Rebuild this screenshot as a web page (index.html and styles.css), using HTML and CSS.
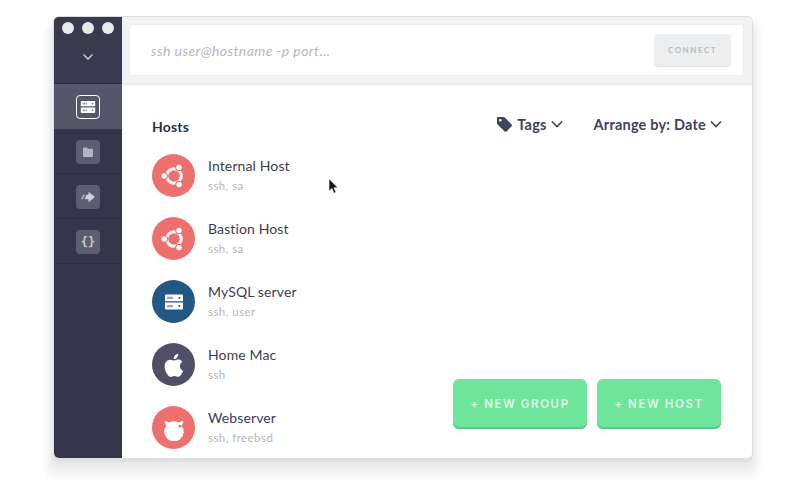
FILE: index.html
```html
<!DOCTYPE html>
<html lang="en">
<head>
<meta charset="utf-8">
<title>Hosts</title>
<link rel="stylesheet" href="styles.css">
</head>
<body>
<svg class="defs" width="0" height="0" aria-hidden="true">
  <symbol id="ubuntu" viewBox="0 0 28 28">
    <circle cx="14" cy="14" r="7.300" fill="none" stroke="#fff" stroke-width="3"/>
    <g fill="#ec706d">
      <circle cx="4.200" cy="14" r="3.800"/><circle cx="19" cy="5.400" r="3.800"/><circle cx="19" cy="22.600" r="3.800"/>
    </g>
    <circle cx="4.200" cy="14" r="2.700" fill="#fff"/>
    <circle cx="19" cy="5.400" r="2.700" fill="#fff"/>
    <circle cx="19" cy="22.600" r="2.700" fill="#fff"/>
  </symbol>
  <symbol id="server" viewBox="0 0 20 20">
    <path fill="currentColor" fill-rule="evenodd" d="M2 2.500h16a1 1 0 0 1 1 1v5.700H1V3.500a1 1 0 0 1 1-1zM3.500 4.800v2.200h1V4.800zm2 0v2.200h1V4.800zm2 0v2.200h1V4.800zM14.500 5.900a1 1 0 1 0 2 0 1 1 0 1 0-2 0zM1 10.600h18v5.900a1 1 0 0 1-1 1H2a1 1 0 0 1-1-1zM3.500 13v2.200h1V13zm2 0v2.200h1V13zm2 0v2.200h1V13zM14.500 14.100a1 1 0 1 0 2 0 1 1 0 1 0-2 0z"/>
  </symbol>
</svg>

<div class="window">
  <nav class="sidebar">
    <div class="side-top">
      <div class="lights"><span class="light"></span><span class="light"></span><span class="light"></span></div>
      <svg class="side-chevron" width="12" height="8" viewBox="0 0 12 8"><path d="M1.500 1.500 6 6l4.500-4.500" fill="none" stroke="#c9cad2" stroke-width="1.500"/></svg>
    </div>
    <div class="side-item active">
      <span class="side-icon outlined"><svg width="16" height="16"><use href="#server"/></svg></span>
    </div>
    <div class="side-item">
      <span class="side-icon"><svg width="12" height="12" viewBox="0 0 12 12"><path fill="#b4b6bf" d="M1 2.500a1 1 0 0 1 1-1h2.800l1.200 1.300h4a1 1 0 0 1 1 1V10a1 1 0 0 1-1 1H2a1 1 0 0 1-1-1z"/></svg></span>
    </div>
    <div class="side-item">
      <span class="side-icon"><svg width="16" height="12" viewBox="0 0 16 12"><path fill="#cfd0d6" d="M8.500 .8 15 6l-6.500 5.200V8.300H4.800L6.400 3.700h2.100z"/><path fill="#a9abb5" d="M.8 8.300 3 3.700h2.300L3.100 8.300z"/></svg></span>
    </div>
    <div class="side-item">
      <span class="side-icon braces">{}</span>
    </div>
  </nav>

  <main class="main">
    <header class="topbar">
      <div class="ssh-box">
        <span class="ssh-placeholder">ssh user@hostname -p port...</span>
        <span class="connect">CONNECT</span>
      </div>
    </header>

    <section class="content">
      <div class="toolbar">
        <h2 class="title">Hosts</h2>
        <div class="filters">
          <span class="filter">
            <svg width="17" height="17" viewBox="0 0 17 17"><path fill="#41435a" fill-rule="evenodd" d="M1 1.800A.8.8 0 0 1 1.800 1h5.600a2 2 0 0 1 1.400.6l6.600 6.600a1.600 1.600 0 0 1 0 2.300l-4.700 4.700a1.600 1.600 0 0 1-2.300 0L1.600 8.400A2 2 0 0 1 1 7zM3 4.300a1.300 1.300 0 1 0 2.600 0 1.300 1.300 0 1 0-2.600 0z"/></svg>
            Tags
            <svg width="12" height="8" viewBox="0 0 12 8"><path d="M1 1.500 6 6.500l5-5" fill="none" stroke="#41435a" stroke-width="1.700"/></svg>
          </span>
          <span class="filter">Arrange by: Date
            <svg width="12" height="8" viewBox="0 0 12 8"><path d="M1 1.500 6 6.500l5-5" fill="none" stroke="#41435a" stroke-width="1.700"/></svg>
          </span>
        </div>
      </div>

      <ul class="hosts">
        <li class="host">
          <span class="avatar red"><svg width="28" height="28"><use href="#ubuntu"/></svg></span>
          <div class="host-text"><div class="host-name">Internal Host</div><div class="host-sub">ssh, sa</div></div>
        </li>
        <li class="host">
          <span class="avatar red"><svg width="28" height="28"><use href="#ubuntu"/></svg></span>
          <div class="host-text"><div class="host-name">Bastion Host</div><div class="host-sub">ssh, sa</div></div>
        </li>
        <li class="host">
          <span class="avatar blue"><svg width="20" height="20"><use href="#server"/></svg></span>
          <div class="host-text"><div class="host-name">MySQL server</div><div class="host-sub">ssh, user</div></div>
        </li>
        <li class="host">
          <span class="avatar slate"><svg width="32" height="32" viewBox="0 0 24 24"><path fill="#fff" d="M16.400 12.700c0-2.100 1.700-3.100 1.800-3.200-1-1.400-2.500-1.600-3-1.600-1.300-.1-2.500.8-3.200.8s-1.700-.8-2.800-.7c-1.400 0-2.800.8-3.500 2.100-1.500 2.600-.4 6.500 1.100 8.600.7 1 1.600 2.200 2.700 2.200s1.500-.7 2.800-.7 1.700.7 2.800.7 1.900-1.100 2.600-2.100c.8-1.200 1.200-2.400 1.200-2.400s-2.500-1-2.500-3.700zM14.300 6.300c.6-.7 1-1.700.9-2.700-.8 0-1.900.6-2.500 1.300-.5.6-1 1.600-.9 2.600.9.100 1.900-.5 2.500-1.200z"/></svg></span>
          <div class="host-text"><div class="host-name">Home Mac</div><div class="host-sub">ssh</div></div>
        </li>
        <li class="host">
          <span class="avatar red"><svg width="26" height="26" viewBox="0 0 26 26"><path fill="#fff" d="M3.500 6c2 .2 3.500.7 4.800 1.500a10 10 0 0 1 9.400 0c1.300-.8 2.800-1.300 4.800-1.500-.3 1.800-.9 3.400-1.800 4.700A9.700 9.700 0 1 1 5.300 10.700C4.400 9.400 3.800 7.800 3.500 6z"/><path fill="#ec706d" d="M17.300 10.500c1.200-.6 2.800-.5 3.500.4-.2 1-1 1.800-2 1.700-.9-.1-1.500-1.100-1.500-2.100z"/></svg></span>
          <div class="host-text"><div class="host-name">Webserver</div><div class="host-sub">ssh, freebsd</div></div>
        </li>
      </ul>

      <div class="actions">
        <span class="action wide">+ NEW GROUP</span>
        <span class="action">+ NEW HOST</span>
      </div>

      <svg class="cursor" width="12" height="17" viewBox="0 0 12 17"><path fill="#16171c" stroke="#fff" stroke-width=".6" d="M1 .8v12.300l3-2.700 2 4.800 2-.9-2-4.600h4z"/></svg>
    </section>
  </main>
</div>
</body>
</html>
```
FILE: styles.css
```css
* { box-sizing: border-box; }
html, body { margin: 0; height: 100%; background: #fff; }
body {
  width: 800px;
  height: 500px;
  overflow: hidden;
  padding: 17px 48px 42px 54px;
  font-family: "Lato", "Liberation Sans", sans-serif;
  color: #41435a;
}
.defs { position: absolute; }

.window {
  display: flex;
  width: 698px;
  height: 441px;
  border-radius: 5px;
  overflow: hidden;
  background: #fff;
  box-shadow: 0 0 0 1px #dcdddf, 0 4px 3px 0 #dedede, 0 9px 4px 4px #ececed, 0 11px 6px 9px #f6f6f6;
}

.sidebar {
  width: 68px;
  flex: none;
  display: flex;
  flex-direction: column;
  background: #35364a;
}
.side-top {
  height: 67px;
  flex: none;
  padding-top: 5px;
  display: flex;
  flex-direction: column;
  align-items: center;
  border-bottom: 1px solid #2b2c3d;
  background: #393a4e;
}
.lights { display: flex; gap: 8px; }
.light { width: 12px; height: 12px; border-radius: 50%; background: #e9e9ec; }
.side-chevron { margin-top: 19px; }

.side-item {
  height: 45px;
  flex: none;
  display: flex;
  align-items: center;
  justify-content: center;
  padding-top: 1px;
  border-bottom: 1px solid #2e2f41;
}
.side-item.active { background: #55566a; border-bottom: none; }
.side-icon {
  width: 24px;
  height: 24px;
  display: flex;
  align-items: center;
  justify-content: center;
  border-radius: 4px;
  background: #5c5d6e;
  color: #fff;
}
.side-icon.outlined { background: transparent; border: 1.500px solid #fff; color: #fff; }
.braces { font: 700 12px "DejaVu Sans Mono", monospace; color: #c6c7ce; }

.main { flex: 1; min-width: 0; display: flex; flex-direction: column; }
.topbar {
  height: 68px;
  flex: none;
  padding: 8px 9px 8px 8px;
  background: #f1f2f2;
  border-bottom: 1px solid #e3e4e5;
}
.ssh-box {
  height: 50px;
  display: flex;
  align-items: center;
  justify-content: space-between;
  padding: 0 12px 0 21px;
  background: #fff;
  border-radius: 3px;
  box-shadow: 0 0 0 1px #eceded;
}
.ssh-placeholder { font-size: 14px; font-style: italic; color: #b5b6b9; letter-spacing: .42px; }
.connect {
  width: 77px;
  height: 32px;
  display: flex;
  align-items: center;
  justify-content: center;
  border-radius: 4px;
  background: #eceef0;
  box-shadow: 0 1px 0 #e2e3e5;
  font-size: 8px;
  font-weight: 700;
  letter-spacing: 1.500px;
  color: #b9babd;
}

.content { flex: 1; position: relative; min-height: 0; padding: 27px 30px 0; overflow: hidden; background: #fff; }
.toolbar { display: flex; justify-content: space-between; align-items: center; height: 24px; }
.title { margin: 0; font-size: 14px; font-weight: 700; color: #2c2e41; letter-spacing: .2px; padding-top: 5px; }
.filters { display: flex; gap: 31px; }
.filter { display: flex; align-items: center; gap: 4px; font-size: 14.500px; font-weight: 700; color: #41435a; letter-spacing: .2px; }

.hosts { list-style: none; margin: 18px 0 0; padding: 0; display: flex; flex-direction: column; gap: 20px; }
.host { display: flex; align-items: center; gap: 13px; height: 43px; }
.avatar {
  width: 43px;
  height: 43px;
  flex: none;
  border-radius: 50%;
  display: flex;
  align-items: center;
  justify-content: center;
  color: #fff;
}
.avatar.red { background: #ec706d; }
.avatar.blue { background: #235784; }
.avatar.slate { background: #4f5066; }
.host-text { display: flex; flex-direction: column; gap: 2px; margin-top: -3px; }
.host-name { font-size: 14px; line-height: 20px; color: #3c3e52; letter-spacing: .12px; }
.host-sub { font-size: 11.500px; line-height: 15px; color: #b3b4b8; letter-spacing: .45px; }

.actions { position: absolute; right: 31px; bottom: 29px; display: flex; gap: 10px; }
.action {
  width: 124px;
  height: 50px;
  display: flex;
  align-items: center;
  justify-content: center;
  border-radius: 6px;
  background: #6ee59b;
  box-shadow: inset 0 -2px 0 #5cc888;
  font-family: "Inter", "Lato", sans-serif;
  font-size: 11.500px;
  font-weight: 600;
  letter-spacing: 1.600px;
  color: #e2f8ea;
}
.action.wide { width: 134px; }
.cursor { position: absolute; left: 206px; top: 93px; }
```
